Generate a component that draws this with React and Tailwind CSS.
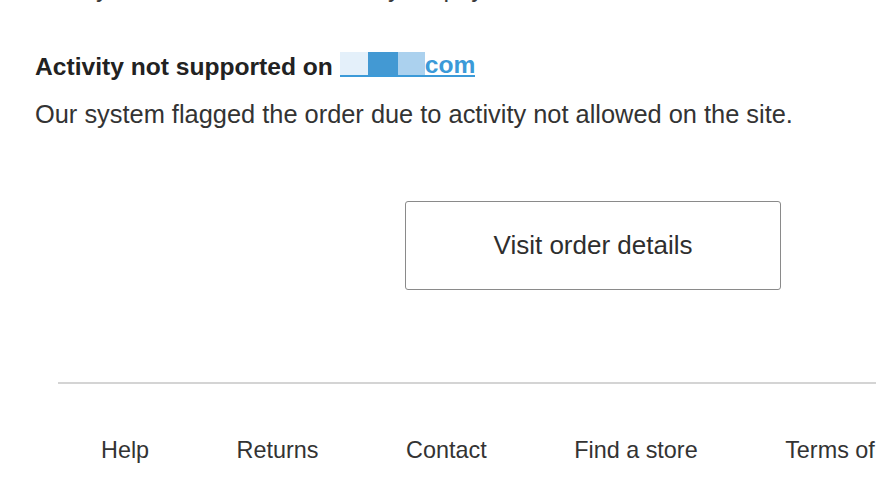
export default function App() {
  const links = ['Help', 'Returns', 'Contact', 'Find a store', 'Terms of use'];

  return (
    <div
      className="w-[876px] h-[492px] overflow-hidden bg-white text-[#2b2b2b]"
      style={{ fontFamily: '"Liberation Sans", Arial, sans-serif' }}
    >
      <div className="px-[35px]">
        {/* previous paragraph, scrolled mostly out of view */}
        <p className="-mt-[28px] text-[25px] leading-[33px] whitespace-nowrap text-[#3a3a3a]">
          Our system could not authorize your payment method for this order.
        </p>

        <h3 className="mt-[45px] text-[24.6px] leading-[33px] font-bold whitespace-nowrap text-[#222]">
          Activity not supported on{' '}
          <a href="#" className="inline-flex items-end align-baseline text-[#3b9ad8]">
            <span className="inline-flex items-end border-b-2 border-[#3b9ad8] leading-[23px]">
              <span className="inline-block w-[28px] h-[23px] bg-[#e4f0fa]" />
              <span className="inline-block w-[30px] h-[23px] bg-[#4399d3]" />
              <span className="inline-block w-[27px] h-[23px] bg-[#abd1ee]" />
              <span className="leading-[21px]">com</span>
            </span>
          </a>
        </h3>

        <p className="mt-[15px] text-[25.4px] leading-[33px] whitespace-nowrap text-[#333]">
          Our system flagged the order due to activity not allowed on the site.
        </p>

        <div className="mt-[70px] ml-[370px]">
          <button className="w-[376px] h-[89px] rounded-[3px] border-[1.5px] border-[#8a8a8a] bg-white text-[26px] text-[#2e2e2e]">
            Visit order details
          </button>
        </div>

        <div className="mt-[92px] ml-[23px] -mr-[35px] h-[2px] bg-[#d4d4d4]" />

        <nav className="mt-[51px] ml-[66px] flex gap-[87.5px] whitespace-nowrap text-[23.4px] leading-[30px] text-[#333]">
          {links.map((l) => (
            <a key={l} href="#">
              {l}
            </a>
          ))}
        </nav>
      </div>
    </div>
  );
}
